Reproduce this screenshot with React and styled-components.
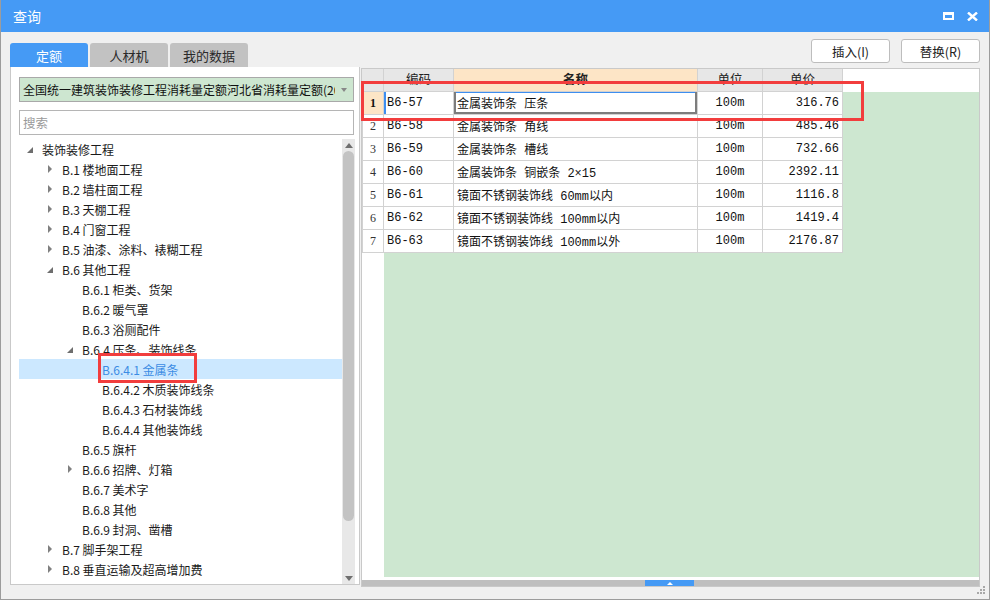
import React from "react";
import styled, { createGlobalStyle, css } from "styled-components";

const GlobalStyle = createGlobalStyle`
  html, body { margin: 0; padding: 0; background: #f0f0f0; }
  body { font-family: "Noto Sans CJK SC", "Noto Sans", sans-serif; font-size: 12px; color: #1e1e1e; }
  * { box-sizing: border-box; }
`;

const BLUE = "#459af5";
const GRID = "#d2d2d2";

const Window = styled.div`
  position: relative;
  width: 990px;
  height: 600px;
  border: 1px solid #9c9c9c;
  border-top: none;
  background: #f0f0f0;
  display: flex;
  flex-direction: column;
  overflow: hidden;
`;

const TitleBar = styled.div`
  height: 32px;
  background: ${BLUE};
  display: flex;
  align-items: center;
  padding: 0 10px 0 12px;
  color: #fff;
  font-size: 14px;
  flex-shrink: 0;
`;

const Title = styled.div`
  flex: 1;
`;

const TitleIcons = styled.div`
  display: flex;
  align-items: center;
  gap: 13px;
  padding-right: 1px;
`;

const MaxIcon = styled.div`
  width: 11px;
  height: 8px;
  border: 2px solid #fff;
  border-top-width: 3px;
`;

const Main = styled.div`
  flex: 1;
  display: flex;
  gap: 1px;
  padding: 0 9px 12px 9px;
  min-height: 0;
`;

const LeftCol = styled.div`
  width: 350px;
  display: flex;
  flex-direction: column;
  padding: 11px 0 2px;
`;

const Tabs = styled.div`
  display: flex;
  gap: 2px;
  height: 24px;
`;

const Tab = styled.div`
  width: 78px;
  display: flex;
  align-items: center;
  justify-content: center;
  border-radius: 3px 3px 0 0;
  font-size: 13px;
  background: #c2c2c2;
  color: #2a2a2a;
  ${(p) =>
    p.$active &&
    css`
      background: ${BLUE};
      color: #fff;
    `}
`;

const LeftPanel = styled.div`
  flex: 1;
  background: #fff;
  border: 1px solid #c9c9c9;
  border-top: none;
  padding: 10px 4px 0 8px;
  display: flex;
  flex-direction: column;
  min-height: 0;
`;

const Select = styled.div`
  height: 25px;
  background: #cde6d0;
  border: 1px solid #a9a9a9;
  display: flex;
  align-items: center;
  padding: 0 0 0 3px;
  font-size: 12px;
  color: #111;
  margin-right: 1px;
`;

const SelectText = styled.div`
  flex: 1;
  white-space: nowrap;
  overflow: hidden;
`;

const SelectArrow = styled.div`
  width: 18px;
  display: flex;
  justify-content: center;
  &::after {
    content: "";
    border-top: 4px solid #888;
    border-left: 3px solid transparent;
    border-right: 3px solid transparent;
  }
`;

const Search = styled.div`
  height: 25px;
  margin-top: 8px;
  margin-right: 1px;
  border: 1px solid #b5b5b5;
  display: flex;
  align-items: center;
  padding-left: 3px;
  color: #9a9a9a;
  font-size: 12.5px;
`;

const TreeArea = styled.div`
  flex: 1;
  display: flex;
  margin-top: 4px;
  min-height: 0;
  overflow: hidden;
`;

const TreeList = styled.div`
  flex: 1;
  overflow: hidden;
`;

const TreeRow = styled.div`
  height: 20px;
  display: flex;
  align-items: center;
  padding-left: ${(p) => p.$level * 20 + 6}px;
  white-space: nowrap;
  font-size: 12px;
  color: #1a1a1a;
  ${(p) =>
    p.$selected &&
    css`
      background: #cce8ff;
      color: #3b8ce4;
    `}
`;

const Toggle = styled.span`
  width: 10px;
  margin-right: 7px;
  display: flex;
  justify-content: center;
  align-items: center;
  &::after {
    content: "";
    ${(p) =>
      p.$state === "closed" &&
      css`
        border-left: 4px solid #808080;
        border-top: 4px solid transparent;
        border-bottom: 4px solid transparent;
      `}
    ${(p) =>
      p.$state === "open" &&
      css`
        border-bottom: 6px solid #6e6e6e;
        border-left: 6px solid transparent;
        margin-top: 2px;
      `}
  }
`;

const VScroll = styled.div`
  width: 13px;
  background: #e8e8e8;
  display: flex;
  flex-direction: column;
  align-items: center;
  padding: 4px 0 3px;
`;

const ScrollArrow = styled.div`
  width: 0;
  height: 0;
  border-left: 4px solid transparent;
  border-right: 4px solid transparent;
  ${(p) =>
    p.$up
      ? css`
          border-bottom: 5px solid #6f6f6f;
        `
      : css`
          border-top: 5px solid #6f6f6f;
        `}
`;

const Thumb = styled.div`
  width: 11px;
  height: 370px;
  margin-top: 3px;
  border-radius: 6px;
  background: #c3c3c3;
`;

const Spacer = styled.div`
  flex: 1;
`;

const RightCol = styled.div`
  flex: 1;
  display: flex;
  flex-direction: column;
  padding-top: 7px;
  min-width: 0;
`;

const Toolbar = styled.div`
  height: 24px;
  display: flex;
  justify-content: flex-end;
  gap: 11px;
  margin-bottom: 5px;
`;

const Button = styled.div`
  width: 79px;
  height: 24px;
  border: 1px solid #bdbdbd;
  border-radius: 3px;
  background: #fff;
  display: flex;
  align-items: center;
  justify-content: center;
  font-size: 12.5px;
  color: #222;
`;

const TablePanel = styled.div`
  flex: 1;
  border: 1px solid #c9c9c9;
  background: #fff;
  display: flex;
  flex-direction: column;
  min-height: 0;
`;

const HeaderRow = styled.div`
  height: 23px;
  display: flex;
  flex-shrink: 0;
`;

const HeadCell = styled.div`
  width: ${(p) => p.$w}px;
  background: ${(p) => (p.$active ? "#fde5c6" : "#e7e7e7")};
  border-right: 1px solid ${GRID};
  border-bottom: 1px solid ${GRID};
  display: flex;
  justify-content: center;
  align-items: center;
  padding-bottom: 4px;
  font-size: 12.5px;
  color: #222;
  font-weight: ${(p) => (p.$active ? 600 : 400)};
`;

const Body = styled.div`
  flex: 1;
  display: flex;
  min-height: 0;
`;

const RowHeads = styled.div`
  width: 22px;
  background: #fff;
`;

const RowHead = styled.div`
  height: 23px;
  border-right: 1px solid ${GRID};
  border-bottom: 1px solid ${GRID};
  border-left: 1px solid ${GRID};
  display: flex;
  align-items: center;
  justify-content: center;
  font-family: "Liberation Serif", serif;
  font-size: 12px;
  color: #333;
  ${(p) =>
    p.$active &&
    css`
      background: #fde5c6;
      font-weight: 700;
      color: #111;
    `}
`;

const DataArea = styled.div`
  flex: 1;
  background: #cde7d0;
`;

const DataRow = styled.div`
  display: flex;
  height: 23px;
`;

const Cell = styled.div`
  width: ${(p) => p.$w}px;
  background: #fff;
  border-right: 1px solid ${GRID};
  border-bottom: 1px solid ${GRID};
  display: flex;
  align-items: center;
  justify-content: ${(p) => p.$align || "flex-start"};
  padding: 0 3px;
  font-family: "Liberation Mono", "Noto Sans CJK SC", monospace;
  font-size: 12px;
  color: #111;
  white-space: nowrap;
  ${(p) =>
    p.$focus &&
    css`
      box-shadow: inset -2px -2px 0 #7d7d7d, inset 2px 0 0 #7d7d7d, inset 0 1px 0 #3d8ef0;
    `}
  ${(p) =>
    p.$leftBlue &&
    css`
      box-shadow: inset 2px 0 0 #3d8ef0;
    `}
`;

const BottomGap = styled.div`
  height: 3px;
  background: #fff;
`;

const HScroll = styled.div`
  height: 6px;
  background: #bfbfbf;
  display: flex;
  align-items: center;
  padding-left: 283px;
  flex-shrink: 0;
`;

const HThumb = styled.div`
  width: 49px;
  height: 6px;
  background: ${BLUE};
  display: flex;
  justify-content: center;
  align-items: center;
  &::after {
    content: "";
    border-bottom: 3px solid #fff;
    border-left: 3px solid transparent;
    border-right: 3px solid transparent;
  }
`;

const Grip = styled.div`
  position: absolute;
  right: 3px;
  bottom: 4px;
  width: 9px;
  height: 9px;
  display: grid;
  grid-template-columns: repeat(3, 2px);
  grid-template-rows: repeat(3, 2px);
  gap: 1px;
  span {
    background: #a8a8a8;
  }
`;

const Annotation = styled.div`
  position: absolute;
  border: 3px solid #f23d3d;
  pointer-events: none;
`;

const treeData = [
  [0, "open", "装饰装修工程"],
  [1, "closed", "B.1 楼地面工程"],
  [1, "closed", "B.2 墙柱面工程"],
  [1, "closed", "B.3 天棚工程"],
  [1, "closed", "B.4 门窗工程"],
  [1, "closed", "B.5 油漆、涂料、裱糊工程"],
  [1, "open", "B.6 其他工程"],
  [2, null, "B.6.1 柜类、货架"],
  [2, null, "B.6.2 暖气罩"],
  [2, null, "B.6.3 浴厕配件"],
  [2, "open", "B.6.4 压条、装饰线条"],
  [3, null, "B.6.4.1 金属条", true],
  [3, null, "B.6.4.2 木质装饰线条"],
  [3, null, "B.6.4.3 石材装饰线"],
  [3, null, "B.6.4.4 其他装饰线"],
  [2, null, "B.6.5 旗杆"],
  [2, "closed", "B.6.6 招牌、灯箱"],
  [2, null, "B.6.7 美术字"],
  [2, null, "B.6.8 其他"],
  [2, null, "B.6.9 封洞、凿槽"],
  [1, "closed", "B.7 脚手架工程"],
  [1, "closed", "B.8 垂直运输及超高增加费"],
  [1, "closed", "B.9 其他可竞争措施项目"],
];

const rows = [
  ["B6-57", "金属装饰条 压条", "100m", "316.76"],
  ["B6-58", "金属装饰条 角线", "100m", "485.46"],
  ["B6-59", "金属装饰条 槽线", "100m", "732.66"],
  ["B6-60", "金属装饰条 铜嵌条 2×15", "100m", "2392.11"],
  ["B6-61", "镜面不锈钢装饰线 60mm以内", "100m", "1116.8"],
  ["B6-62", "镜面不锈钢装饰线 100mm以内", "100m", "1419.4"],
  ["B6-63", "镜面不锈钢装饰线 100mm以外", "100m", "2176.87"],
];

const cols = { code: 70, name: 244, unit: 65, price: 80 };

export default function App() {
  return (
    <>
      <GlobalStyle />
      <Window>
        <TitleBar>
          <Title>查询</Title>
          <TitleIcons>
            <MaxIcon />
            <svg width="11" height="9" viewBox="0 0 11 9">
              <path d="M1 0.5 L10 8.5 M10 0.5 L1 8.5" stroke="#fff" strokeWidth="2.4" />
            </svg>
          </TitleIcons>
        </TitleBar>
        <Main>
          <LeftCol>
            <Tabs>
              <Tab $active>定额</Tab>
              <Tab>人材机</Tab>
              <Tab>我的数据</Tab>
            </Tabs>
            <LeftPanel>
              <Select>
                <SelectText>全国统一建筑装饰装修工程消耗量定额河北省消耗量定额(2012)</SelectText>
                <SelectArrow />
              </Select>
              <Search>搜索</Search>
              <TreeArea>
                <TreeList>
                  {treeData.map(([level, state, label, selected]) => (
                    <TreeRow key={label} $level={level} $selected={selected}>
                      <Toggle $state={state} />
                      {label}
                    </TreeRow>
                  ))}
                </TreeList>
                <VScroll>
                  <ScrollArrow $up />
                  <Thumb />
                  <Spacer />
                  <ScrollArrow />
                </VScroll>
              </TreeArea>
            </LeftPanel>
          </LeftCol>
          <RightCol>
            <Toolbar>
              <Button>插入(I)</Button>
              <Button>替换(R)</Button>
            </Toolbar>
            <TablePanel>
              <HeaderRow>
                <HeadCell $w={22} />
                <HeadCell $w={cols.code}>编码</HeadCell>
                <HeadCell $w={cols.name} $active>名称</HeadCell>
                <HeadCell $w={cols.unit}>单位</HeadCell>
                <HeadCell $w={cols.price}>单价</HeadCell>
              </HeaderRow>
              <Body>
                <RowHeads>
                  {rows.map((r, i) => (
                    <RowHead key={r[0]} $active={i === 0}>
                      {i + 1}
                    </RowHead>
                  ))}
                </RowHeads>
                <DataArea>
                  {rows.map((r, i) => (
                    <DataRow key={r[0]}>
                      <Cell $w={cols.code} $leftBlue={i === 0}>{r[0]}</Cell>
                      <Cell $w={cols.name} $focus={i === 0}>{r[1]}</Cell>
                      <Cell $w={cols.unit} $align="center">{r[2]}</Cell>
                      <Cell $w={cols.price} $align="flex-end">{r[3]}</Cell>
                    </DataRow>
                  ))}
                </DataArea>
              </Body>
              <BottomGap />
              <HScroll>
                <HThumb />
              </HScroll>
            </TablePanel>
          </RightCol>
        </Main>
        <Grip>
          <span style={{ gridColumn: 3, gridRow: 1 }} />
          <span style={{ gridColumn: 2, gridRow: 2 }} />
          <span style={{ gridColumn: 3, gridRow: 2 }} />
          <span style={{ gridColumn: 1, gridRow: 3 }} />
          <span style={{ gridColumn: 2, gridRow: 3 }} />
          <span style={{ gridColumn: 3, gridRow: 3 }} />
        </Grip>
        <Annotation style={{ left: 360, top: 81, width: 503, height: 40 }} />
        <Annotation style={{ left: 97, top: 353, width: 99, height: 30 }} />
      </Window>
    </>
  );
}
